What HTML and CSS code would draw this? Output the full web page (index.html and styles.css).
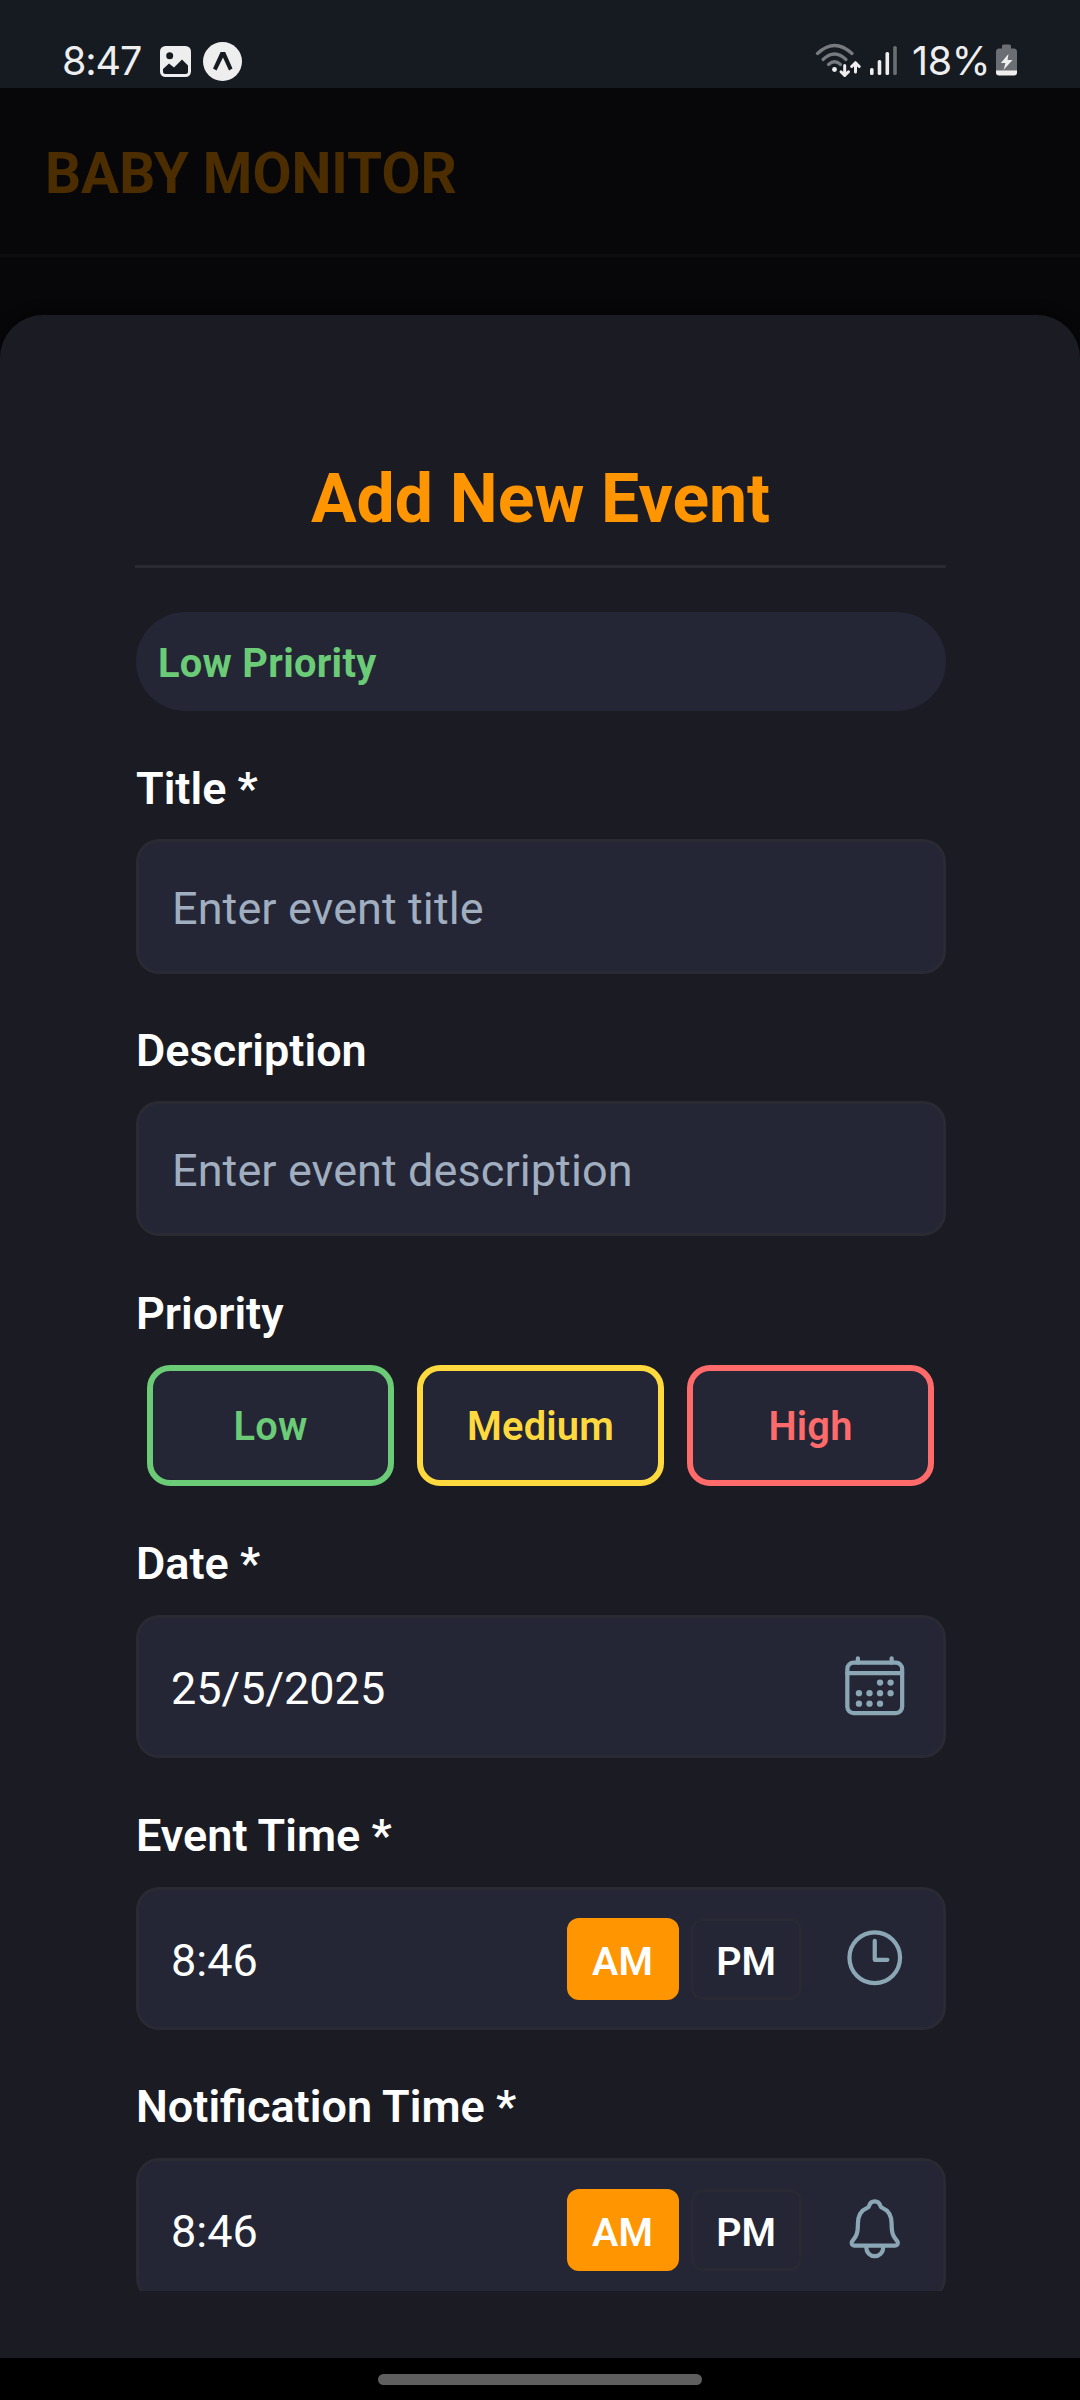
FILE: index.html
```html
<!DOCTYPE html>
<html lang="en">
<head>
<meta charset="utf-8">
<title>Baby Monitor</title>
<link rel="stylesheet" href="styles.css">
</head>
<body>
<div class="screen">
  <div class="status">
    <div class="status-left">
      <span class="clock">8:47</span>
      <svg class="ic-image" width="31" height="31" viewBox="0 0 31 31"><rect width="31" height="31" rx="5.5" fill="#eee"/><circle cx="9.7" cy="9.7" r="3.5" fill="#161a21"/><path d="M3 23 L9 17.5 L14 21.5 L22 13.500 L28 19.500 V25.500 Q28 28 25.500 28 H5.500 Q3 28 3 25.500Z" fill="#161a21"/></svg>
      <svg class="ic-app" width="39" height="39" viewBox="0 0 39 39"><circle cx="19.500" cy="19.500" r="19.500" fill="#eee"/><path d="M17.600 10 H22.200 L29.500 26.500 L26 28.500 L20 15.500 L13.500 28.500 L10 26.500Z" fill="#161a21"/></svg>
    </div>
    <div class="status-right">
      <svg width="46" height="36" viewBox="0 0 46 36" fill="none" stroke-linecap="round"><g stroke="#777a7f" stroke-width="3.200"><path d="M2.500 10.500 Q19.500 -5.500 37 10.500"/><path d="M8 16.500 Q19.500 5.500 31 16.500"/><path d="M13.500 21.500 Q19.500 16 25.500 21.500"/></g><circle cx="19.500" cy="26.500" r="2.400" fill="#eee"/><g stroke="#eee" stroke-width="3" stroke-linejoin="round"><path d="M29.700 22.500 V32 M26 28.800 L29.700 32.500 L33.500 28.800"/><path d="M40.500 29 V20 M36.700 23.500 L40.500 19.700 L44.200 23.500"/></g></svg>
      <svg class="ic-signal" width="28" height="30" viewBox="0 0 28 30"><g fill="#eee"><rect x="0" y="22" width="3.600" height="7" rx="1.600"/><rect x="7.700" y="14" width="3.600" height="15" rx="1.600"/><rect x="15.500" y="6" width="3.600" height="23" rx="1.600"/></g><rect x="23.200" y="0" width="3.600" height="29" rx="1.600" fill="#6b6e73"/></svg>
      <span class="percent">18%</span>
      <svg class="ic-battery" width="21" height="32" viewBox="0 0 21 31"><path d="M6 1.500 Q6 0 7.500 0 H13.500 Q15 0 15 1.500 V4 H18 Q21 4 21 7.500 V26.500 H0 V7.500 Q0 4 3 4 H6Z" fill="#6b6e73"/><path d="M0 26 H21 V28 Q21 31 18 31 H3 Q0 31 0 28Z" fill="#eee"/><path d="M12.500 9.500 L4.800 18.500 H9.500 L7.500 25.500 L16.500 15.500 H11.500Z" fill="#eee"/></svg>
    </div>
  </div>

  <header class="app-header"><h1 class="app-name">BABY MONITOR</h1></header>

  <main class="sheet">
    <div class="scroll">
      <h2 class="sheet-title">Add New Event</h2>
      <div class="priority-pill">Low Priority</div>

      <section class="field field-title">
        <label class="label">Title *</label>
        <input class="box input" placeholder="Enter event title">
      </section>
      <section class="field">
        <label class="label">Description</label>
        <input class="box input" placeholder="Enter event description">
      </section>
      <section class="field">
        <label class="label">Priority</label>
        <div class="options">
          <div class="option low">Low</div>
          <div class="option medium">Medium</div>
          <div class="option high">High</div>
        </div>
      </section>
      <section class="field">
        <label class="label">Date *</label>
        <div class="box row">
          <span class="value">25/5/2025</span>
          <svg class="icon" viewBox="0 0 512 512"><rect x="48" y="80" width="416" height="384" rx="48"/><path d="M128 48v32M384 48v32M464 160H48"/><g class="dots"><circle cx="296" cy="232" r="24"/><circle cx="376" cy="232" r="24"/><circle cx="296" cy="312" r="24"/><circle cx="376" cy="312" r="24"/><circle cx="136" cy="312" r="24"/><circle cx="216" cy="312" r="24"/><circle cx="136" cy="392" r="24"/><circle cx="216" cy="392" r="24"/><circle cx="296" cy="392" r="24"/></g></svg>
        </div>
      </section>
      <section class="field field-time">
        <label class="label">Event Time *</label>
        <div class="box row">
          <span class="value">8:46</span>
          <div class="meridiem"><span class="half active">AM</span><span class="half">PM</span></div>
          <svg class="icon" viewBox="0 0 512 512"><circle cx="256" cy="256" r="192"/><path d="M256 128v144h96"/></svg>
        </div>
      </section>
      <section class="field">
        <label class="label">Notification Time *</label>
        <div class="box row">
          <span class="value">8:46</span>
          <div class="meridiem"><span class="half active">AM</span><span class="half">PM</span></div>
          <svg class="icon" viewBox="0 0 512 512"><path d="M427.680 351.430C402 320 383.870 304 383.870 217.350 383.870 138 343.350 109.730 310 96c-4.430-1.820-8.600-6-9.950-10.550C294.200 65.540 277.800 48 256 48s-38.210 17.550-44 37.470c-1.350 4.600-5.520 8.710-9.950 10.530-33.390 13.750-73.870 41.920-73.870 121.350C128.130 304 110 320 84.320 351.430 73.680 364.450 83 384 101.610 384h308.880c18.510 0 27.770-19.610 17.190-32.570zM320 384v16a64 64 0 01-128 0v-16"/></svg>
        </div>
      </section>
    </div>
  </main>

  <div class="nav"><div class="handle"></div></div>
</div>
</body>
</html>
```
FILE: styles.css
```css
* { box-sizing: border-box; }
body { margin: 0; background: #000; font-family: Roboto, "Liberation Sans", sans-serif; }
.screen { width: 1080px; height: 2400px; display: flex; flex-direction: column; background: #070709; overflow: hidden; }

.status { height: 88px; flex: none; background: #161a21; color: #eee; display: flex; justify-content: space-between; padding: 37px 62px 0 62px; font: 400 39.5px/48px Inter, sans-serif; }
.status-left, .status-right { display: flex; align-items: center; height: 48px; }
.clock { width: 98px; letter-spacing: -1.1px; }
.ic-app { margin-left: 12px; }
.ic-signal { margin-left: 9px; }
.percent { margin-left: 14px; width: 84px; letter-spacing: -0.4px; margin-top: -1px; }
.ic-battery { margin: -2px 1px 0 0; }

.app-header { height: 169px; flex: none; padding: 53px 45px 0; border-bottom: 3px solid #0d0d0f; }
.app-name { margin: 0; font-size: 56.6px; line-height: 66px; font-weight: 700; color: #4c2d00; }

.sheet { margin-top: 58px; height: 2043px; flex: none; background: #1b1b24; border-radius: 43px 43px 0 0; padding: 141px 134px 0 135px; box-shadow: 0 -4px 12px rgba(0,0,0,.35); }
.scroll { height: 1835px; overflow: hidden; padding-left: 1px; }
.sheet-title { margin: 0 0 44px -1px; height: 112px; padding-top: 4px; border-bottom: 3px solid #2a2a33; text-align: center; font-size: 67.9px; line-height: 79px; font-weight: 700; color: #ff9500; }
.priority-pill { height: 99px; border-radius: 50px; background: #242635; color: #6bcb77; padding: 1px 22px 0; font-size: 39.8px; line-height: 102px; font-weight: 700; letter-spacing: 0.3px; margin-bottom: 51px; }

.field { margin-bottom: 51px; }
.field-title, .field-time { margin-bottom: 50px; }
.label { display: block; height: 53px; margin-bottom: 25px; font-size: 45px; line-height: 53px; font-weight: 600; color: #fff; }
.box { width: 810px; border: 3px solid #2a2a33; border-radius: 23px; background: #242635; color: #fff; font: 400 45px/53px Roboto, "Liberation Sans", sans-serif; }
.input { display: block; height: 135px; margin: -1px 0 0; padding: 3px 33px 0; outline: none; letter-spacing: 0.08px; }
.input::placeholder { color: #a0aec0; opacity: 1; }
.row { height: 143px; display: flex; align-items: center; padding: 0 35px 0 32px; }
.value { flex: 1; padding-top: 4px; }
.icon { width: 67.5px; height: 67.5px; flex: none; margin-top: -1px; fill: none; stroke: #8ba7b5; stroke-width: 32; stroke-linecap: round; stroke-linejoin: round; }
.dots { fill: #8ba7b5; stroke: none; }

.options { display: flex; gap: 23px; padding: 0 12px 0 11px; }
.option { flex: 1; height: 121px; border: 6px solid; border-radius: 23px; background: #242635; text-align: center; font-size: 39.8px; line-height: 112px; font-weight: 600; letter-spacing: 0.2px; }
.low { color: #6bcb77; }
.medium { color: #ffd93d; }
.high { color: #ff6b6b; }

.meridiem { display: flex; gap: 12px; margin-right: 39px; }
.half { width: 111px; height: 82px; border: 3px solid #292934; border-radius: 12px; text-align: center; font-size: 39.4px; line-height: 81px; font-weight: 600; }
.half.active { width: 112px; background: #ff9500; border-color: #ff9500; }

.nav { height: 42px; flex: none; background: #000; display: flex; justify-content: center; padding-top: 16px; }
.handle { width: 324px; height: 11px; border-radius: 6px; background: #5f5f5f; }
```
